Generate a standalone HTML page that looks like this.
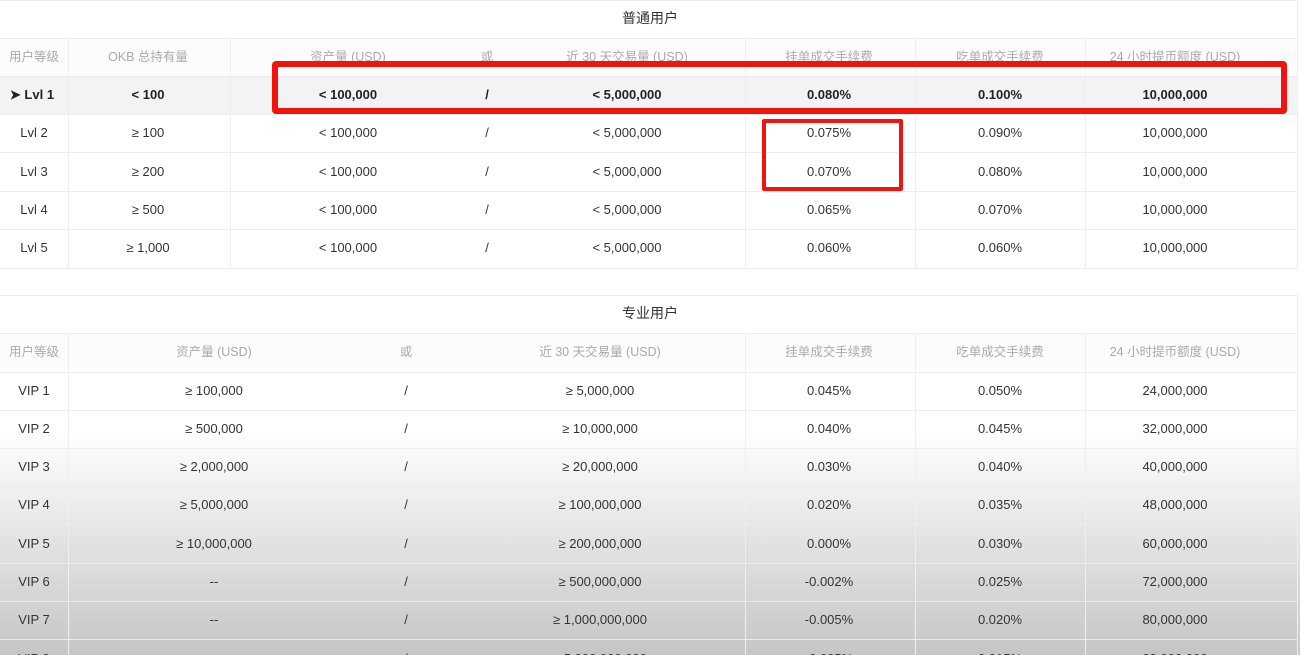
<!DOCTYPE html>
<html><head><meta charset="utf-8"><style>
*{margin:0;padding:0;box-sizing:border-box}
html,body{width:1300px;height:655px;overflow:hidden;background:#fff}
#w{position:relative;width:1300px;height:655px;overflow:hidden;font-family:"Liberation Sans","Noto Sans CJK SC",sans-serif;font-size:13px;color:#333}
.a{position:absolute}
.t{position:absolute;width:240px;margin-left:-120px;text-align:center;line-height:16px;margin-top:-8px;white-space:nowrap}
.h{color:#aaa;font-size:12.5px}
.hl{position:absolute;height:1px;background:#ececec;left:0;width:1298px}
.vl{position:absolute;width:1px;background:#efefef}
.b{font-weight:bold;color:#222}
</style></head><body><div id="w">
<!-- gradient overlay (behind text) -->
<div class="a" style="left:0;top:430px;width:1300px;height:225px;background:linear-gradient(rgba(160,160,160,0),rgba(160,160,160,0.6))"></div>
<!-- table 1 -->
<div class="a" style="left:0;top:76px;width:1298px;height:38px;background:#f3f3f3"></div>
<div class="a" style="left:0;top:38px;width:1298px;height:38px;background:#fcfcfc"></div>
<div class="hl" style="top:0"></div>
<div class="hl" style="top:38px"></div>
<div class="hl" style="top:76px"></div>
<div class="hl" style="top:114px"></div>
<div class="hl" style="top:152px"></div>
<div class="hl" style="top:191px"></div>
<div class="hl" style="top:229px"></div>
<div class="hl" style="top:268px"></div>
<div class="vl" style="left:68px;top:38px;height:230px"></div>
<div class="vl" style="left:230px;top:38px;height:230px"></div>
<div class="vl" style="left:745px;top:38px;height:230px"></div>
<div class="vl" style="left:915px;top:38px;height:230px"></div>
<div class="vl" style="left:1085px;top:38px;height:230px"></div>
<div class="vl" style="left:1297px;top:0;height:268px"></div>
<div class="t" style="left:650px;top:18px;font-size:14px;color:#333">普通用户</div>
<div class="t h" style="left:34px;top:57px">用户等级</div>
<div class="t h" style="left:148px;top:57px">OKB 总持有量</div>
<div class="t h" style="left:348px;top:57px">资产量 (USD)</div>
<div class="t h" style="left:487px;top:57px">或</div>
<div class="t h" style="left:627px;top:57px">近 30 天交易量 (USD)</div>
<div class="t h" style="left:829px;top:57px">挂单成交手续费</div>
<div class="t h" style="left:1000px;top:57px">吃单成交手续费</div>
<div class="t h" style="left:1175px;top:57px">24 小时提币额度 (USD)</div>

<div class="t b" style="left:32px;top:95px">➤ Lvl 1</div>
<div class="t b" style="left:148px;top:95px">&lt; 100</div>
<div class="t b" style="left:348px;top:95px">&lt; 100,000</div>
<div class="t b" style="left:487px;top:95px">/</div>
<div class="t b" style="left:627px;top:95px">&lt; 5,000,000</div>
<div class="t b" style="left:829px;top:95px">0.080%</div>
<div class="t b" style="left:1000px;top:95px">0.100%</div>
<div class="t b" style="left:1175px;top:95px">10,000,000</div>

<div class="t" style="left:34px;top:133px">Lvl 2</div><div class="t" style="left:148px;top:133px">≥ 100</div><div class="t" style="left:348px;top:133px">&lt; 100,000</div><div class="t" style="left:487px;top:133px">/</div><div class="t" style="left:627px;top:133px">&lt; 5,000,000</div><div class="t" style="left:829px;top:133px">0.075%</div><div class="t" style="left:1000px;top:133px">0.090%</div><div class="t" style="left:1175px;top:133px">10,000,000</div>
<div class="t" style="left:34px;top:172px">Lvl 3</div><div class="t" style="left:148px;top:172px">≥ 200</div><div class="t" style="left:348px;top:172px">&lt; 100,000</div><div class="t" style="left:487px;top:172px">/</div><div class="t" style="left:627px;top:172px">&lt; 5,000,000</div><div class="t" style="left:829px;top:172px">0.070%</div><div class="t" style="left:1000px;top:172px">0.080%</div><div class="t" style="left:1175px;top:172px">10,000,000</div>
<div class="t" style="left:34px;top:210px">Lvl 4</div><div class="t" style="left:148px;top:210px">≥ 500</div><div class="t" style="left:348px;top:210px">&lt; 100,000</div><div class="t" style="left:487px;top:210px">/</div><div class="t" style="left:627px;top:210px">&lt; 5,000,000</div><div class="t" style="left:829px;top:210px">0.065%</div><div class="t" style="left:1000px;top:210px">0.070%</div><div class="t" style="left:1175px;top:210px">10,000,000</div>
<div class="t" style="left:34px;top:248px">Lvl 5</div><div class="t" style="left:148px;top:248px">≥ 1,000</div><div class="t" style="left:348px;top:248px">&lt; 100,000</div><div class="t" style="left:487px;top:248px">/</div><div class="t" style="left:627px;top:248px">&lt; 5,000,000</div><div class="t" style="left:829px;top:248px">0.060%</div><div class="t" style="left:1000px;top:248px">0.060%</div><div class="t" style="left:1175px;top:248px">10,000,000</div>

<!-- table 2 -->
<div class="a" style="left:0;top:333px;width:1298px;height:39px;background:#fcfcfc"></div>
<div class="hl" style="top:295px"></div>
<div class="hl" style="top:333px"></div>
<div class="hl" style="top:372px"></div>
<div class="hl" style="top:410px"></div>
<div class="hl" style="top:448px"></div>
<div class="hl" style="top:486px"></div>
<div class="hl" style="top:524px"></div>
<div class="hl" style="top:563px"></div>
<div class="hl" style="top:601px"></div>
<div class="hl" style="top:639px"></div>
<div class="vl" style="left:68px;top:333px;height:322px"></div>
<div class="vl" style="left:745px;top:333px;height:322px"></div>
<div class="vl" style="left:915px;top:333px;height:322px"></div>
<div class="vl" style="left:1085px;top:333px;height:322px"></div>
<div class="vl" style="left:1297px;top:295px;height:360px"></div>
<div class="t" style="left:650px;top:313px;font-size:14px;color:#333">专业用户</div>
<div class="t h" style="left:34px;top:352px">用户等级</div>
<div class="t h" style="left:214px;top:352px">资产量 (USD)</div>
<div class="t h" style="left:406px;top:352px">或</div>
<div class="t h" style="left:600px;top:352px">近 30 天交易量 (USD)</div>
<div class="t h" style="left:829px;top:352px">挂单成交手续费</div>
<div class="t h" style="left:1000px;top:352px">吃单成交手续费</div>
<div class="t h" style="left:1175px;top:352px">24 小时提币额度 (USD)</div>

<div class="t" style="left:34px;top:391px">VIP 1</div><div class="t" style="left:214px;top:391px">≥ 100,000</div><div class="t" style="left:406px;top:391px">/</div><div class="t" style="left:600px;top:391px">≥ 5,000,000</div><div class="t" style="left:829px;top:391px">0.045%</div><div class="t" style="left:1000px;top:391px">0.050%</div><div class="t" style="left:1175px;top:391px">24,000,000</div>
<div class="t" style="left:34px;top:429px">VIP 2</div><div class="t" style="left:214px;top:429px">≥ 500,000</div><div class="t" style="left:406px;top:429px">/</div><div class="t" style="left:600px;top:429px">≥ 10,000,000</div><div class="t" style="left:829px;top:429px">0.040%</div><div class="t" style="left:1000px;top:429px">0.045%</div><div class="t" style="left:1175px;top:429px">32,000,000</div>
<div class="t" style="left:34px;top:467px">VIP 3</div><div class="t" style="left:214px;top:467px">≥ 2,000,000</div><div class="t" style="left:406px;top:467px">/</div><div class="t" style="left:600px;top:467px">≥ 20,000,000</div><div class="t" style="left:829px;top:467px">0.030%</div><div class="t" style="left:1000px;top:467px">0.040%</div><div class="t" style="left:1175px;top:467px">40,000,000</div>
<div class="t" style="left:34px;top:505px">VIP 4</div><div class="t" style="left:214px;top:505px">≥ 5,000,000</div><div class="t" style="left:406px;top:505px">/</div><div class="t" style="left:600px;top:505px">≥ 100,000,000</div><div class="t" style="left:829px;top:505px">0.020%</div><div class="t" style="left:1000px;top:505px">0.035%</div><div class="t" style="left:1175px;top:505px">48,000,000</div>
<div class="t" style="left:34px;top:544px">VIP 5</div><div class="t" style="left:214px;top:544px">≥ 10,000,000</div><div class="t" style="left:406px;top:544px">/</div><div class="t" style="left:600px;top:544px">≥ 200,000,000</div><div class="t" style="left:829px;top:544px">0.000%</div><div class="t" style="left:1000px;top:544px">0.030%</div><div class="t" style="left:1175px;top:544px">60,000,000</div>
<div class="t" style="left:34px;top:582px">VIP 6</div><div class="t" style="left:214px;top:582px">--</div><div class="t" style="left:406px;top:582px">/</div><div class="t" style="left:600px;top:582px">≥ 500,000,000</div><div class="t" style="left:829px;top:582px">-0.002%</div><div class="t" style="left:1000px;top:582px">0.025%</div><div class="t" style="left:1175px;top:582px">72,000,000</div>
<div class="t" style="left:34px;top:620px">VIP 7</div><div class="t" style="left:214px;top:620px">--</div><div class="t" style="left:406px;top:620px">/</div><div class="t" style="left:600px;top:620px">≥ 1,000,000,000</div><div class="t" style="left:829px;top:620px">-0.005%</div><div class="t" style="left:1000px;top:620px">0.020%</div><div class="t" style="left:1175px;top:620px">80,000,000</div>
<div class="t" style="left:34px;top:659px">VIP 8</div><div class="t" style="left:214px;top:659px">--</div><div class="t" style="left:406px;top:659px">/</div><div class="t" style="left:600px;top:659px">≥ 5,000,000,000</div><div class="t" style="left:829px;top:659px">-0.005%</div><div class="t" style="left:1000px;top:659px">0.015%</div><div class="t" style="left:1175px;top:659px">88,000,000</div>

<!-- red boxes -->
<div class="a" style="left:272px;top:61px;width:1015px;height:53px;border:6px solid #f0140f;border-radius:4px"></div>
<div class="a" style="left:762px;top:119px;width:141px;height:72px;border:4px solid #f0140f;border-radius:2px"></div>
</div></body></html>
